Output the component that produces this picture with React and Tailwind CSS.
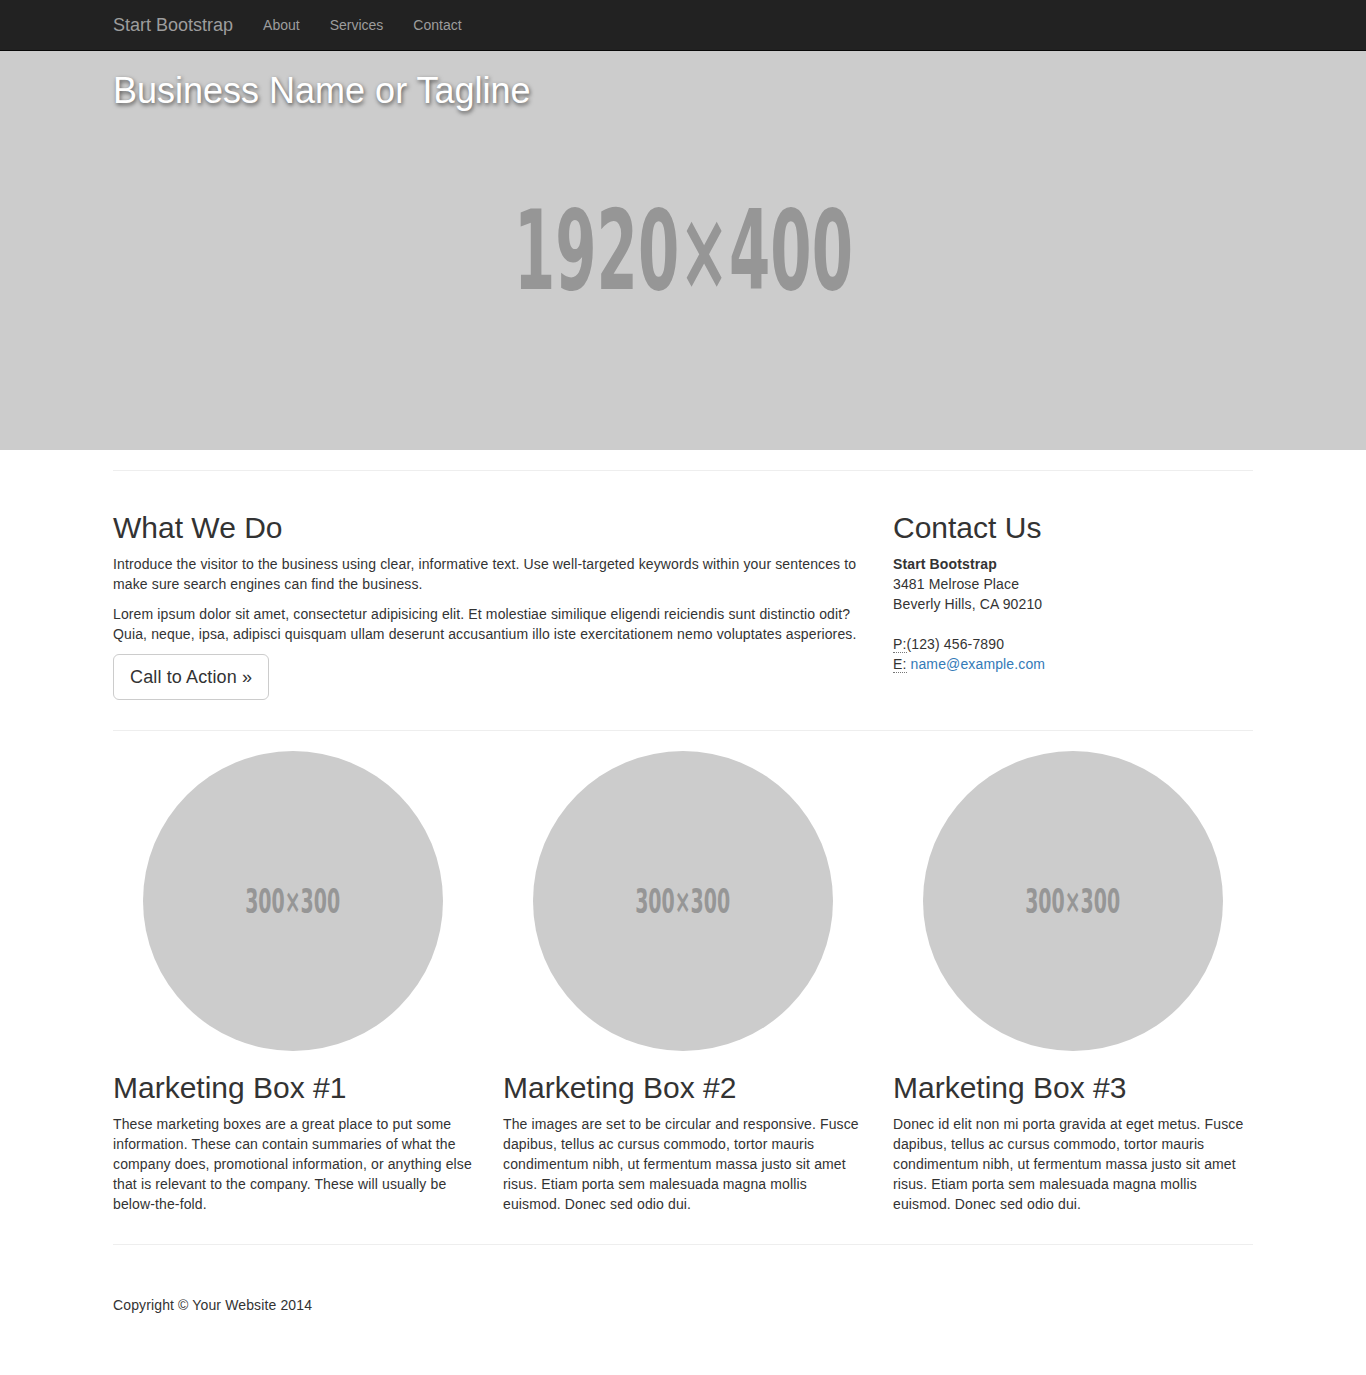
import React from "react";

const font = "font-['Liberation_Sans','Helvetica_Neue',Helvetica,Arial,sans-serif]";
const narrow = "font-['DejaVu_Sans_Condensed','DejaVu_Sans',sans-serif] font-bold";

function Container({ children, className = "" }) {
  return <div className={`max-w-[1170px] mx-auto px-[15px] ${className}`}>{children}</div>;
}

function Hr() {
  return <div className="h-px bg-[#eeeeee]" />;
}

function Box({ title, text }) {
  return (
    <div>
      <div className="flex justify-center">
        <div className="w-[300px] h-[300px] rounded-full bg-[#cccccc] flex items-center justify-center">
          <span className={`${narrow} text-[#969696] text-[34px] leading-none scale-x-[0.62] inline-block`}>300×300</span>
        </div>
      </div>
      <h2 className="mt-[20px] mb-[10px] text-[30px] leading-[1.1] font-medium">{title}</h2>
      <p className="text-[14px] leading-[20px] tracking-[0.13px]">{text}</p>
    </div>
  );
}

export default function App() {
  return (
    <div className={`${font} text-[#333333] bg-white text-[14px] leading-[20px]`}>
      <nav className="h-[51px] bg-[#222222] border-b border-[#080808]">
        <Container className="flex items-center h-[50px]">
          <a className="text-[18px] leading-[20px] text-[#9d9d9d] pr-[15px]">Start Bootstrap</a>
          <a className="text-[14px] leading-[20px] text-[#9d9d9d] px-[15px]">About</a>
          <a className="text-[14px] leading-[20px] text-[#9d9d9d] px-[15px]">Services</a>
          <a className="text-[14px] leading-[20px] text-[#9d9d9d] px-[15px]">Contact</a>
        </Container>
      </nav>

      <header className="h-[399px] bg-[#cccccc] grid overflow-hidden">
        <div className="col-start-1 row-start-1 flex items-center justify-center">
          <span className={`${narrow} text-[#969696] text-[110px] leading-none scale-x-[0.6] inline-block`}>1920×400</span>
        </div>
        <div className="col-start-1 row-start-1 self-start w-full">
          <Container>
            <h1 className="mt-[20px] text-[36px] leading-[1.1] text-white font-medium [text-shadow:1px_2px_4px_rgba(0,0,0,0.6)]">
              Business Name or Tagline
            </h1>
          </Container>
        </div>
      </header>

      <Container>
        <div className="pt-[20px]">
          <Hr />
        </div>

        <div className="flex pt-[40px] tracking-[0.13px]">
          <div className="w-[750px] mr-[30px]">
            <h2 className="mb-[10px] text-[30px] leading-[33px] font-medium tracking-normal">What We Do</h2>
            <p className="mb-[10px]">
              Introduce the visitor to the business using clear, informative text. Use well-targeted keywords within your sentences to make sure search engines can find the business.
            </p>
            <p className="mb-[10px]">
              Lorem ipsum dolor sit amet, consectetur adipisicing elit. Et molestiae similique eligendi reiciendis sunt distinctio odit? Quia, neque, ipsa, adipisci quisquam ullam deserunt accusantium illo iste exercitationem nemo voluptates asperiores.
            </p>
            <p className="mb-[10px]">
              <a className="inline-block border border-[#cccccc] rounded-[6px] bg-white px-[16px] py-[10px] text-[18px] leading-[24px] text-[#333333]">
                Call to Action »
              </a>
            </p>
          </div>
          <div className="w-[360px]">
            <h2 className="mb-[10px] text-[30px] leading-[33px] font-medium tracking-normal">Contact Us</h2>
            <address className="not-italic mb-[20px]">
              <strong className="font-bold">Start Bootstrap</strong>
              <br />
              3481 Melrose Place
              <br />
              Beverly Hills, CA 90210
              <br />
              <br />
              <abbr title="Phone" className="no-underline border-b border-dotted border-[#777777]">P:</abbr>(123) 456-7890
              <br />
              <abbr title="Email" className="no-underline border-b border-dotted border-[#777777]">E:</abbr>{" "}
              <a className="text-[#337ab7]">name@example.com</a>
            </address>
          </div>
        </div>

        <div className="pt-[20px] pb-[20px]">
          <Hr />
        </div>

        <div className="grid grid-cols-3 gap-[30px]">
          <Box
            title="Marketing Box #1"
            text="These marketing boxes are a great place to put some information. These can contain summaries of what the company does, promotional information, or anything else that is relevant to the company. These will usually be below-the-fold."
          />
          <Box
            title="Marketing Box #2"
            text="The images are set to be circular and responsive. Fusce dapibus, tellus ac cursus commodo, tortor mauris condimentum nibh, ut fermentum massa justo sit amet risus. Etiam porta sem malesuada magna mollis euismod. Donec sed odio dui."
          />
          <Box
            title="Marketing Box #3"
            text="Donec id elit non mi porta gravida at eget metus. Fusce dapibus, tellus ac cursus commodo, tortor mauris condimentum nibh, ut fermentum massa justo sit amet risus. Etiam porta sem malesuada magna mollis euismod. Donec sed odio dui."
          />
        </div>

        <div className="pt-[30px]">
          <Hr />
        </div>

        <footer className="pt-[50px] pb-[60px] tracking-[0.13px]">
          <p>Copyright © Your Website 2014</p>
        </footer>
      </Container>
    </div>
  );
}
